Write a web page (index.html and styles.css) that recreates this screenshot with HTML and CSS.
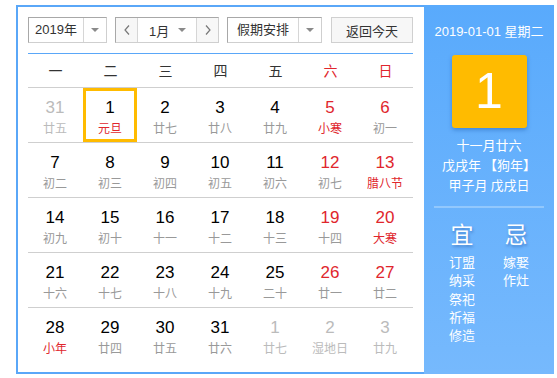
FILE: index.html
```
<!DOCTYPE html>
<html lang="zh-CN">
<head>
<meta charset="utf-8">
<title>万年历</title>
<link rel="stylesheet" href="styles.css">
</head>
<body>
<div class="cal">
  <div class="main">
    <div class="toolbar">
      <div class="box year">
        <span class="box-text">2019年</span>
        <span class="box-arrow"><i class="tri"></i></span>
      </div>
      <div class="box month">
        <span class="nav"><svg width="6" height="10" viewBox="0 0 6 10"><polyline points="5,0.5 1,5 5,9.5" fill="none" stroke="#777" stroke-width="1.2"/></svg></span>
        <span class="month-text"><span>1月</span><i class="tri"></i></span>
        <span class="nav next"><svg width="6" height="10" viewBox="0 0 6 10"><polyline points="1,0.5 5,5 1,9.5" fill="none" stroke="#777" stroke-width="1.2"/></svg></span>
      </div>
      <div class="box holiday">
        <span class="box-text">假期安排</span>
        <span class="box-arrow"><i class="tri"></i></span>
      </div>
      <div class="btn">返回今天</div>
    </div>
    <div class="weekhead">
      <span>一</span><span>二</span><span>三</span><span>四</span><span>五</span><span class="red">六</span><span class="red">日</span>
    </div>
    <div class="weeks">
      <div class="week">
        <div class="day other"><b>31</b><em>廿五</em></div>
        <div class="day today"><b>1</b><em class="fest">元旦</em></div>
        <div class="day"><b>2</b><em>廿七</em></div>
        <div class="day"><b>3</b><em>廿八</em></div>
        <div class="day"><b>4</b><em>廿九</em></div>
        <div class="day wkend"><b>5</b><em class="fest">小寒</em></div>
        <div class="day wkend"><b>6</b><em>初一</em></div>
      </div>
      <div class="week">
        <div class="day"><b>7</b><em>初二</em></div>
        <div class="day"><b>8</b><em>初三</em></div>
        <div class="day"><b>9</b><em>初四</em></div>
        <div class="day"><b>10</b><em>初五</em></div>
        <div class="day"><b>11</b><em>初六</em></div>
        <div class="day wkend"><b>12</b><em>初七</em></div>
        <div class="day wkend"><b>13</b><em class="fest">腊八节</em></div>
      </div>
      <div class="week">
        <div class="day"><b>14</b><em>初九</em></div>
        <div class="day"><b>15</b><em>初十</em></div>
        <div class="day"><b>16</b><em>十一</em></div>
        <div class="day"><b>17</b><em>十二</em></div>
        <div class="day"><b>18</b><em>十三</em></div>
        <div class="day wkend"><b>19</b><em>十四</em></div>
        <div class="day wkend"><b>20</b><em class="fest">大寒</em></div>
      </div>
      <div class="week">
        <div class="day"><b>21</b><em>十六</em></div>
        <div class="day"><b>22</b><em>十七</em></div>
        <div class="day"><b>23</b><em>十八</em></div>
        <div class="day"><b>24</b><em>十九</em></div>
        <div class="day"><b>25</b><em>二十</em></div>
        <div class="day wkend"><b>26</b><em>廿一</em></div>
        <div class="day wkend"><b>27</b><em>廿二</em></div>
      </div>
      <div class="week">
        <div class="day"><b>28</b><em class="fest">小年</em></div>
        <div class="day"><b>29</b><em>廿四</em></div>
        <div class="day"><b>30</b><em>廿五</em></div>
        <div class="day"><b>31</b><em>廿六</em></div>
        <div class="day other"><b>1</b><em>廿七</em></div>
        <div class="day other"><b>2</b><em>湿地日</em></div>
        <div class="day other"><b>3</b><em>廿九</em></div>
      </div>
    </div>
  </div>
  <div class="side">
    <div class="side-date">2019-01-01 星期二</div>
    <div class="big-day">1</div>
    <div class="lunar">
      <p>十一月廿六</p>
      <p>戊戌年 【狗年】</p>
      <p>甲子月 戊戌日</p>
    </div>
    <div class="divider"></div>
    <div class="yiji">
      <div class="col">
        <div class="yj-title">宜</div>
        <p>订盟</p><p>纳采</p><p>祭祀</p><p>祈福</p><p>修造</p>
      </div>
      <div class="col">
        <div class="yj-title">忌</div>
        <p>嫁娶</p><p>作灶</p>
      </div>
    </div>
  </div>
</div>
</body>
</html>
```
FILE: styles.css
```
* { box-sizing: border-box; }
html, body { margin: 0; padding: 0; background: #fff; }
body {
  font-family: "Liberation Sans", Arial, "Noto Sans CJK SC", sans-serif;
  color: #333;
}
.cal {
  display: flex;
  margin: 5px 0 0 16px;
  width: 538px;
  height: 369px;
}
.main {
  width: 408px;
  height: 369px;
  border: 2px solid #5aa7f8;
  border-right: none;
  padding: 10px 11px 0 10px;
}
.toolbar {
  display: flex;
  height: 26px;
  font-size: 13px;
}
.box {
  display: flex;
  height: 26px;
  border: 1px solid;
  border-color: #a8a8a8 #cfcfcf #cfcfcf #a8a8a8;
  background: #fff;
}
.box-text {
  display: flex;
  align-items: center;
  justify-content: center;
  border-right: 1px solid #d6d6d6;
  line-height: 24px;
}
.box-arrow {
  flex: 1;
  display: flex;
  align-items: center;
  justify-content: center;
}
.tri {
  display: block;
  width: 0;
  height: 0;
  border-left: 4px solid transparent;
  border-right: 4px solid transparent;
  border-top: 4px solid #8a8a8a;
}
.year { width: 79px; }
.year .box-text { width: 55px; }
.month { width: 104px; margin-left: 8px; }
.nav {
  width: 22px;
  display: flex;
  align-items: center;
  justify-content: center;
  background: #f7f7f7;
  border-right: 1px solid #d6d6d6;
}
.nav.next { border-right: none; border-left: 1px solid #d6d6d6; width: 22px; }
.month-text {
  flex: 1;
  display: flex;
  align-items: center;
  padding: 0 10px 0 10px;
  justify-content: space-between;
}
.month-text span { padding-left: 1px; }
.holiday { width: 95px; margin-left: 8px; }
.holiday .box-text { width: 71px; }
.btn {
  width: 82px;
  height: 26px;
  margin-left: 9px;
  border: 1px solid #d0d0d0;
  background: #f7f7f7;
  display: flex;
  align-items: center;
  justify-content: center;
}
.weekhead {
  margin-top: 10px;
  display: grid;
  grid-template-columns: repeat(7, 55px);
  height: 35px;
  border-top: 1px solid #5aa7f8;
  border-bottom: 1px solid #cfcfcf;
  font-size: 14px;
  color: #333;
}
.weekhead span {
  display: flex;
  align-items: center;
  justify-content: center;
  padding-bottom: 1px;
}
.red { color: #e0262d; }
.week {
  display: grid;
  grid-template-columns: repeat(7, 55px);
  height: 55px;
  border-bottom: 1px solid #cfcfcf;
}
.week:last-child { border-bottom: none; }
.day {
  width: 54px;
  height: 54px;
  display: flex;
  flex-direction: column;
  align-items: center;
  padding-top: 10px;
}
.day b {
  font-weight: normal;
  font-size: 17px;
  line-height: 20px;
  color: #000;
}
.day em {
  font-style: normal;
  font-size: 12px;
  line-height: 18px;
  margin-top: 1px;
  color: #999;
  font-family: "Noto Sans CJK SC", sans-serif;
}
.day.wkend b { color: #e0262d; }
.day em.fest { color: #e0262d; }
.day.other b, .day.other em { color: #bbb; }
.day.today {
  border: 3px solid #ffbb00;
  padding-top: 7px;
}
.side {
  width: 130px;
  height: 369px;
  background: linear-gradient(#59aafc, #76b9fd);
  color: #fff;
  display: flex;
  flex-direction: column;
  align-items: center;
  padding-top: 19px;
}
.side-date {
  font-size: 13px;
  line-height: 16px;
}
.big-day {
  margin-top: 15px;
  width: 75px;
  height: 73px;
  background: #ffbb00;
  border-radius: 3px;
  box-shadow: 0 2px 4px rgba(0, 60, 140, 0.35);
  font-size: 50px;
  line-height: 73px;
  text-align: center;
  color: #fff;
}
.lunar {
  margin-top: 7px;
  font-size: 13px;
  line-height: 20px;
  text-align: center;
  font-family: "Noto Sans CJK SC", sans-serif;
}
.lunar p { margin: 0; }
.divider {
  margin-top: 11px;
  width: 110px;
  height: 2px;
  background: #92c8fd;
}
.yiji {
  display: flex;
  gap: 22px;
  margin-top: 11px;
  font-family: "Noto Sans CJK SC", sans-serif;
}
.col {
  width: 32px;
  display: flex;
  flex-direction: column;
  align-items: center;
}
.yj-title {
  font-size: 23px;
  line-height: 28px;
  text-shadow: 1px 2px 3px rgba(0, 40, 120, 0.35);
  margin-bottom: 6px;
}
.col p {
  margin: 0;
  font-size: 13px;
  line-height: 18.3px;
}
```
